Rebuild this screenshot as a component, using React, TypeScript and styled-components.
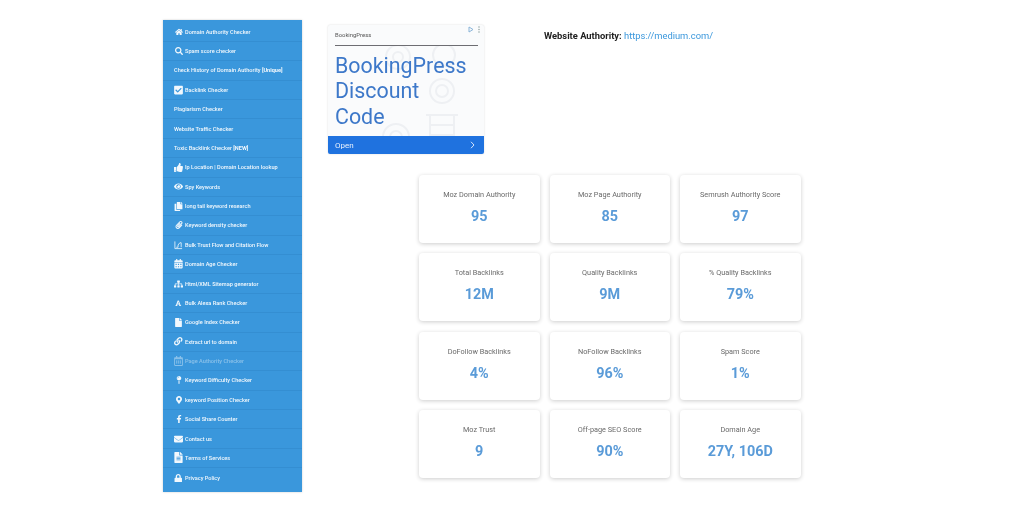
import React from 'react';
import styled, { createGlobalStyle } from 'styled-components';
import {
  FaHome, FaSearch, FaCheckSquare, FaThumbsUp, FaEye, FaCopy, FaPaperclip,
  FaCalendarAlt, FaSitemap, FaFont, FaFile, FaLink, FaRegCalendarAlt, FaMapPin,
  FaMapMarkerAlt, FaFacebookF, FaEnvelope, FaFileAlt, FaLock,
} from 'react-icons/fa';

const GlobalStyle = createGlobalStyle`
  html, body { margin: 0; padding: 0; background: #fff; }
  body { font-family: Roboto, "Liberation Sans", sans-serif; }
`;

const FlowIcon = () => (
  <svg width="10" height="10" viewBox="0 0 10 10">
    <path d="M1 1v8h8M2.5 7.5h2V5l2-2.5h1.5v5" fill="none" stroke="currentColor" strokeWidth=".9" />
  </svg>
);

const menu: { icon?: React.ReactNode; size?: number; label: React.ReactNode; faded?: boolean }[] = [
  { icon: <FaHome />, label: 'Domain Authority Checker' },
  { icon: <FaSearch />, label: 'Spam score checker' },
  { label: <>Check History of Domain Authority <b>[Unique]</b></> },
  { icon: <FaCheckSquare />, size: 10, label: 'Backlink Checker' },
  { label: 'Plagiarism Checker' },
  { label: 'Website Traffic Checker' },
  { label: <>Toxic Backlink Checker <b>[NEW]</b></> },
  { icon: <FaThumbsUp />, size: 9, label: 'Ip Location | Domain Location lookup' },
  { icon: <FaEye />, size: 9, label: 'Spy Keywords' },
  { icon: <FaCopy />, size: 9, label: 'long tail keyword research' },
  { icon: <FaPaperclip />, label: 'Keyword density checker' },
  { icon: <FlowIcon />, label: 'Bulk Trust Flow and Citation Flow' },
  { icon: <FaCalendarAlt />, size: 9.5, label: 'Domain Age Checker' },
  { icon: <FaSitemap />, size: 10, label: 'Html/XML Sitemap generator' },
  { icon: <FaFont />, size: 6.5, label: 'Bulk Alexa Rank Checker' },
  { icon: <FaFile />, size: 9, label: 'Google Index Checker' },
  { icon: <FaLink />, size: 8.5, label: 'Extract url to domain' },
  { icon: <FaRegCalendarAlt />, size: 10, label: 'Page Authority Checker', faded: true },
  { icon: <FaMapPin />, label: 'Keyword Difficulty Checker' },
  { icon: <FaMapMarkerAlt />, label: 'keyword Position Checker' },
  { icon: <FaFacebookF />, label: 'Social Share Counter' },
  { icon: <FaEnvelope />, size: 10, label: 'Contact us' },
  { icon: <FaFileAlt />, size: 11, label: 'Terms of Services' },
  { icon: <FaLock />, size: 8.5, label: 'Privacy Policy' },
];

const stats = [
  ['Moz Domain Authority', '95'],
  ['Moz Page Authority', '85'],
  ['Semrush Authority Score', '97'],
  ['Total Backlinks', '12M'],
  ['Quality Backlinks', '9M'],
  ['% Quality Backlinks', '79%'],
  ['DoFollow Backlinks', '4%'],
  ['NoFollow Backlinks', '96%'],
  ['Spam Score', '1%'],
  ['Moz Trust', '9'],
  ['Off-page SEO Score', '90%'],
  ['Domain Age', '27Y, 106D'],
];

export default function App() {
  return (
    <Page>
      <GlobalStyle />
      <Sidebar>
        {menu.map((item, i) => (
          <MenuRow key={i} $faded={item.faded}>
            {item.icon && <MenuIcon $size={item.size}>{item.icon}</MenuIcon>}
            <span>{item.label}</span>
          </MenuRow>
        ))}
      </Sidebar>
      <Content>
        <TopRow>
          <Ad>
            <AdPattern width="90" height="110" viewBox="0 0 90 110">
              <g fill="none" stroke="#eef0f3" strokeWidth="2">
                <circle cx="22" cy="12" r="12" />
                <circle cx="22" cy="12" r="5" />
                <circle cx="68" cy="10" r="11" />
                <circle cx="66" cy="46" r="12" />
                <circle cx="66" cy="46" r="6" />
                <circle cx="20" cy="92" r="13" />
                <circle cx="20" cy="92" r="6" />
                <path d="M50 70h32M54 80h24M54 90h24M54 70v35M78 70v35" />
              </g>
            </AdPattern>
            <AdMark>
              <svg width="14" height="7" viewBox="0 0 14 7">
                <path d="M1 1l4 2.5L1 6z" fill="none" stroke="#8ab4d8" strokeWidth="1" />
                <circle cx="11" cy="1" r=".8" fill="#9aa" />
                <circle cx="11" cy="3.5" r=".8" fill="#9aa" />
                <circle cx="11" cy="6" r=".8" fill="#9aa" />
              </svg>
            </AdMark>
            <AdBrand>BookingPress</AdBrand>
            <AdHeadline>BookingPress Discount Code</AdHeadline>
            <AdButton>
              <span>Open</span>
              <svg width="5" height="8" viewBox="0 0 5 8">
                <path d="M1 .8l3 3.2-3 3.2" fill="none" stroke="#d5e4fb" strokeWidth="1" />
              </svg>
            </AdButton>
          </Ad>
          <SiteLine>
            <b>Website Authority:</b> <SiteLink>https://medium.com/</SiteLink>
          </SiteLine>
        </TopRow>
        <StatGrid>
          {stats.map(([label, value]) => (
            <StatCard key={label}>
              <StatLabel>{label}</StatLabel>
              <StatValue>{value}</StatValue>
            </StatCard>
          ))}
        </StatGrid>
      </Content>
    </Page>
  );
}

const Page = styled.div`
  display: flex;
  align-items: flex-start;
  width: 1024px;
  height: 512px;
  overflow: hidden;
  padding: 20px 0 0 163px;
  box-sizing: border-box;
  filter: blur(0.4px);
`;

const Sidebar = styled.nav`
  width: 139px;
  height: 472px;
  flex: none;
  box-sizing: border-box;
  padding-top: 2.5px;
  background: #3a97dc;
  box-shadow: 0 0 2px rgba(0, 0, 0, 0.2);
`;

const MenuRow = styled.div<{ $faded?: boolean }>`
  height: 19.38px;
  box-sizing: border-box;
  display: flex;
  align-items: center;
  gap: 2px;
  padding-left: 11px;
  border-bottom: 1px solid rgba(20, 90, 150, 0.14);
  color: ${(p) => (p.$faded ? 'rgba(255,255,255,0.4)' : '#f2f8fd')};
  font-size: 5.6px;
  font-weight: 500;
  white-space: nowrap;

  &:last-child {
    border-bottom: none;
  }

  b {
    font-weight: 700;
  }
`;

const MenuIcon = styled.span<{ $size?: number }>`
  width: 9px;
  display: flex;
  justify-content: center;
  font-size: ${(p) => p.$size ?? 8}px;
  color: inherit;
`;

const Content = styled.div`
  flex: 1;
  padding: 5px 0 0 26px;
`;

const TopRow = styled.div`
  display: flex;
  align-items: flex-start;
`;

const Ad = styled.div`
  position: relative;
  width: 156px;
  height: 129px;
  flex: none;
  display: flex;
  flex-direction: column;
  background: #fafbfc;
  border-radius: 2px;
  box-shadow: 0 0 2px rgba(0, 0, 0, 0.16);
  overflow: hidden;
`;

const AdPattern = styled.svg`
  position: absolute;
  right: 18px;
  top: 20px;
`;

const AdMark = styled.span`
  position: absolute;
  top: 1px;
  right: 2px;
  line-height: 0;
`;

const AdBrand = styled.div`
  position: relative;
  margin: 0 6px 0 7px;
  height: 20px;
  line-height: 20px;
  border-bottom: 1px solid #6d6d72;
  font-size: 5.9px;
  color: #555;
`;

const AdHeadline = styled.div`
  position: relative;
  flex: 1;
  padding: 6.5px 16px 0 7px;
  font-size: 21.4px;
  line-height: 25.5px;
  color: #3d78c9;
`;

const AdButton = styled.div`
  position: relative;
  height: 18px;
  display: flex;
  align-items: center;
  justify-content: space-between;
  padding: 0 9px 0 7px;
  background: #1f72df;
  color: #e8f0fc;
  font-size: 8px;
`;

const SiteLine = styled.div`
  margin: 5px 0 0 60px;
  font-size: 9.35px;
  color: #222;
`;

const SiteLink = styled.span`
  color: #3a97dc;
`;

const StatGrid = styled.div`
  display: grid;
  grid-template-columns: repeat(3, 120.5px);
  grid-auto-rows: 68px;
  gap: 10.3px 10px;
  margin: 21px 0 0 91px;
`;

const StatCard = styled.div`
  display: flex;
  flex-direction: column;
  align-items: center;
  background: #fff;
  border-radius: 4px;
  box-shadow: 0 1px 4px rgba(0, 0, 0, 0.2);
`;

const StatLabel = styled.div`
  margin-top: 15px;
  font-size: 7.3px;
  color: #6a6a6a;
`;

const StatValue = styled.div`
  margin-top: 9px;
  font-size: 14.4px;
  font-weight: 700;
  color: #5a9bd8;
`;
